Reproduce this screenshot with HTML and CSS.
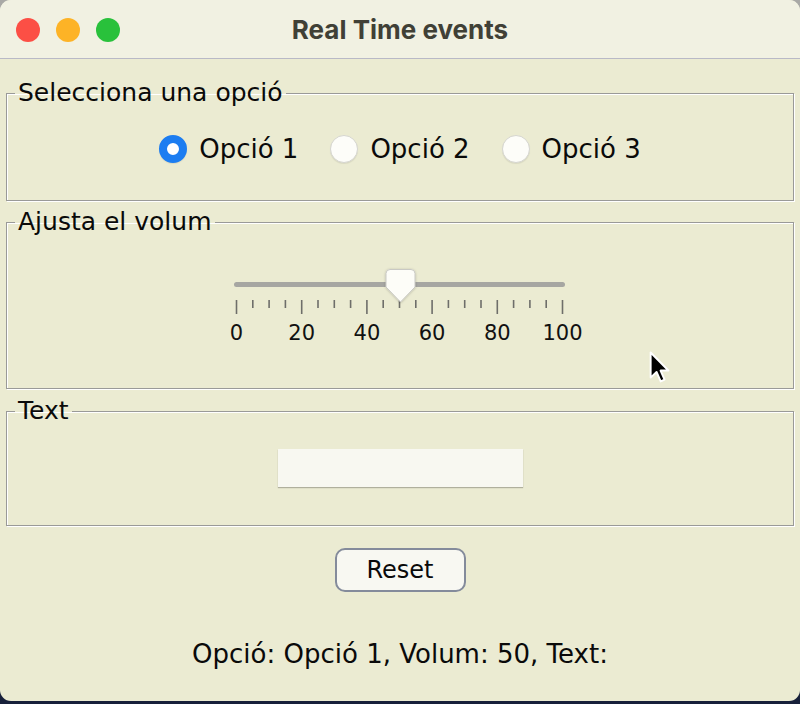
FILE: index.html
```html
<!DOCTYPE html>
<html lang="ca">
<head>
<meta charset="utf-8">
<title>Real Time events</title>
<link rel="stylesheet" href="styles.css">
</head>
<body>
<div class="window">
  <header class="titlebar">
    <div class="lights">
      <span class="light red"></span>
      <span class="light yellow"></span>
      <span class="light green"></span>
    </div>
    <div class="title">Real Time events</div>
    <div class="spacer"></div>
  </header>
  <main class="content">
    <fieldset class="group g-radio">
      <legend>Selecciona una opció</legend>
      <div class="radios">
        <label class="radio"><span class="dot checked"></span>Opció 1</label>
        <label class="radio"><span class="dot"></span>Opció 2</label>
        <label class="radio"><span class="dot"></span>Opció 3</label>
      </div>
    </fieldset>
    <fieldset class="group g-slider">
      <legend>Ajusta el volum</legend>
      <svg class="slider" width="368" height="80" viewBox="0 0 368 80">
        <defs>
          <filter id="sh" x="-30%" y="-30%" width="160%" height="160%">
            <feDropShadow dx="0" dy="0.5" stdDeviation="0.8" flood-color="#000" flood-opacity="0.25"/>
          </filter>
        </defs>
        <line x1="20.5" y1="19.5" x2="346.5" y2="19.5" stroke="#a6a6a2" stroke-width="5" stroke-linecap="round"/>
        <g stroke="#6e6e6a" stroke-width="1.6">
          <line x1="20.5" y1="35" x2="20.5" y2="49"/>
          <line x1="36.8" y1="35" x2="36.8" y2="43"/>
          <line x1="53.1" y1="35" x2="53.1" y2="43"/>
          <line x1="69.4" y1="35" x2="69.4" y2="43"/>
          <line x1="85.7" y1="35" x2="85.7" y2="49"/>
          <line x1="102" y1="35" x2="102" y2="43"/>
          <line x1="118.3" y1="35" x2="118.3" y2="43"/>
          <line x1="134.6" y1="35" x2="134.6" y2="43"/>
          <line x1="150.9" y1="35" x2="150.9" y2="49"/>
          <line x1="167.2" y1="35" x2="167.2" y2="43"/>
          <line x1="183.5" y1="35" x2="183.5" y2="43"/>
          <line x1="199.8" y1="35" x2="199.8" y2="43"/>
          <line x1="216.1" y1="35" x2="216.1" y2="49"/>
          <line x1="232.4" y1="35" x2="232.4" y2="43"/>
          <line x1="248.7" y1="35" x2="248.7" y2="43"/>
          <line x1="265" y1="35" x2="265" y2="43"/>
          <line x1="281.3" y1="35" x2="281.3" y2="49"/>
          <line x1="297.6" y1="35" x2="297.6" y2="43"/>
          <line x1="313.9" y1="35" x2="313.9" y2="43"/>
          <line x1="330.2" y1="35" x2="330.2" y2="43"/>
          <line x1="346.5" y1="35" x2="346.5" y2="49"/>
        </g>
        <path d="M174,4.5 H195 Q199,4.5 199,8.5 V22 L184.5,37 L170,22 V8.5 Q170,4.5 174,4.5 Z" fill="#fdfdf8" stroke="#c9c9c4" stroke-width="1" filter="url(#sh)"/>
        <g class="ticklabels" font-size="21" text-anchor="middle" fill="#111">
          <text x="20.5" y="75">0</text>
          <text x="85.7" y="75">20</text>
          <text x="150.9" y="75">40</text>
          <text x="216.1" y="75">60</text>
          <text x="281.3" y="75">80</text>
          <text x="346.5" y="75">100</text>
        </g>
      </svg>
    </fieldset>
    <fieldset class="group g-text">
      <legend>Text</legend>
      <div class="field"></div>
    </fieldset>
    <div class="actions"><button class="btn" type="button">Reset</button></div>
    <p class="status">Opció: Opció 1, Volum: 50, Text:</p>
  </main>
  <svg class="cursor" width="24" height="34" viewBox="0 0 16 23">
    <path d="M1,1 L1,18 L5,14.2 L7.8,20.6 L10.4,19.4 L7.7,13.2 L13,13.2 Z" fill="#000" stroke="#fff" stroke-width="1.3" stroke-linejoin="round"/>
  </svg>
</div>
</body>
</html>
```

FILE: styles.css
```css
html {
  background: linear-gradient(#a9a9a6 0, #a9a9a6 50%, #17203a 50%, #17203a 100%);
  height: 100%;
}
body {
  margin: 0;
  font-family: "DejaVu Sans", "Liberation Sans", sans-serif;
  color: #0a0a0a;
}
.window {
  position: relative;
  width: 800px;
  height: 701px;
  background: #ebebd2;
  border-radius: 11px;
  overflow: hidden;
}
.titlebar {
  height: 58px;
  background: #f1f1e2;
  border-bottom: 1px solid #b9b9c6;
  display: grid;
  grid-template-columns: 1fr auto 1fr;
  align-items: center;
}
.lights {
  display: flex;
  gap: 16px;
  padding-left: 16px;
  padding-top: 2px;
}
.light {
  width: 24px;
  height: 24px;
  border-radius: 50%;
}
.red { background: #fc4f45; }
.yellow { background: #fdb326; }
.green { background: #29c13b; }
.title {
  font-family: "Inter", "DejaVu Sans", sans-serif;
  font-weight: 700;
  font-size: 26px;
  color: #404036;
  padding-top: 1px;
}
.content {
  padding: 0 6px;
}
.group {
  margin: 0;
  padding: 0;
  border: 1px solid #9a9a98;
  box-shadow: inset 1px 1px 0 #fff, 1px 1px 0 #fff;
  min-width: 0;
}
.group legend {
  margin-left: 8px;
  padding: 0 3px;
  font-size: 25px;
  line-height: 28px;
}
.g-radio {
  margin-top: 20px;
  padding: 27px 0 37px;
}
.g-slider {
  margin-top: 7px;
  padding: 29px 0 43px;
}
.g-text {
  margin-top: 8px;
  padding: 24px 0 38px;
}
.radios {
  display: flex;
  justify-content: center;
  gap: 32px;
  font-size: 26px;
  height: 28px;
  align-items: center;
  padding-top: 1px;
}
.radio {
  display: flex;
  align-items: center;
  gap: 12px;
}
.dot {
  width: 28px;
  height: 28px;
  border-radius: 50%;
  box-sizing: border-box;
  background: #fdfdf9;
  border: 1px solid #d6d6d0;
  box-shadow: 0 1px 1px rgba(0,0,0,0.08);
}
.dot.checked {
  background: #fff;
  border: 8px solid #1c7df1;
}
.slider {
  display: block;
  margin: 0 auto;
  font-family: "DejaVu Sans", sans-serif;
}
.field {
  width: 245px;
  height: 38px;
  margin: 0 auto;
  background: #f8f8f1;
  box-shadow: 0 1px 1px rgba(0,0,0,0.25);
}
.actions {
  display: flex;
  justify-content: center;
  margin-top: 22px;
}
.btn {
  width: 131px;
  height: 44px;
  border: 2px solid #848b9b;
  border-radius: 10px;
  background: #f8f8f2;
  font-family: "DejaVu Sans", sans-serif;
  font-size: 24px;
  color: #0a0a0a;
  padding: 0;
}
.status {
  margin: 47px 0 0;
  text-align: center;
  font-size: 26px;
  line-height: 30px;
}
.cursor {
  position: absolute;
  left: 649px;
  top: 351px;
}
```
